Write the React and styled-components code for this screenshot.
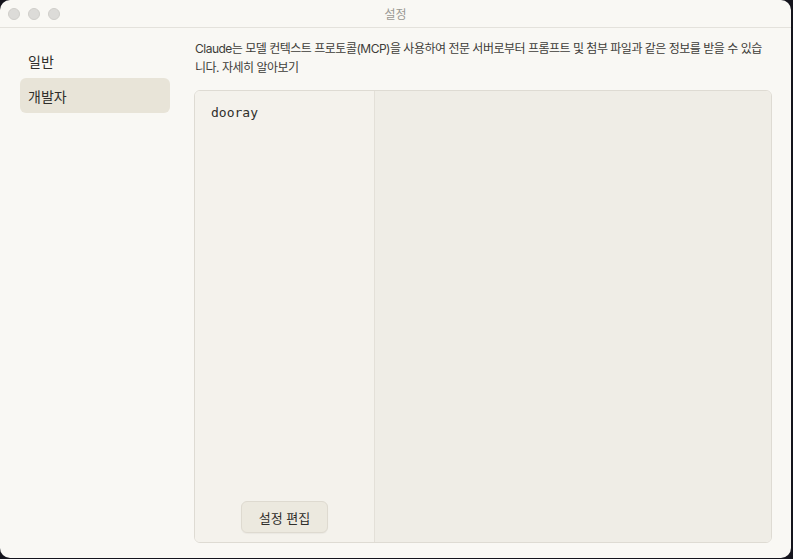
import React from 'react'
import styled, { createGlobalStyle } from 'styled-components'

const Global = createGlobalStyle`
  html, body { margin: 0; padding: 0; background: #14141c; }
  body { font-family: Inter, "Noto Sans CJK KR", "Noto Sans", sans-serif; }
`

const Window = styled.div`
  width: 791px;
  height: 558px;
  background: #f9f8f4;
  border-radius: 10px;
  overflow: hidden;
  display: flex;
  flex-direction: column;
`

const TitleBar = styled.div`
  height: 27px;
  border-bottom: 1px solid #e4e2dc;
  display: flex;
  align-items: center;
  position: relative;
  padding-left: 8px;
  gap: 8px;
  flex-shrink: 0;
`

const Light = styled.span`
  width: 12px;
  height: 12px;
  border-radius: 50%;
  background: #dcdbd8;
  border: 1px solid #cfceca;
  box-sizing: border-box;
`

const Title = styled.div`
  position: absolute;
  left: 0;
  right: 0;
  top: 5px;
  text-align: center;
  font-size: 12px;
  color: #9a9893;
  pointer-events: none;
`

const Body = styled.div`
  flex: 1;
  display: flex;
  padding: 0 19px 15px 20px;
  min-height: 0;
`

const Sidebar = styled.div`
  width: 150px;
  padding-top: 15px;
  display: flex;
  flex-direction: column;
`

const NavItem = styled.div`
  height: 35px;
  display: flex;
  align-items: center;
  padding-left: 8px;
  border-radius: 6px;
  font-size: 14px;
  color: #2f2e2b;
  background: ${p => (p.active ? '#e8e4d8' : 'transparent')};
`

const Main = styled.div`
  flex: 1;
  margin-left: 24px;
  display: flex;
  flex-direction: column;
  min-width: 0;
`

const Desc = styled.p`
  margin: 11px 0 0 1px;
  font-size: 12px;
  line-height: 19px;
  letter-spacing: -0.5px;
  color: #3d3c38;
  word-break: break-all;
`

const Panel = styled.div`
  flex: 1;
  margin-top: 13px;
  border: 1px solid #dedbd3;
  border-radius: 6px;
  overflow: hidden;
  display: flex;
`

const ServerList = styled.div`
  width: 179px;
  background: #f4f2ec;
  border-right: 1px solid #e3e0d8;
  display: flex;
  flex-direction: column;
`

const Server = styled.div`
  padding: 14px 0 0 16px;
  font-family: "DejaVu Sans Mono", "Liberation Mono", monospace;
  font-size: 13px;
  color: #2f2e2b;
`

const Footer = styled.div`
  margin-top: auto;
  display: flex;
  justify-content: center;
  padding-bottom: 9px;
`

const Button = styled.button`
  width: 87px;
  height: 32px;
  background: #ece9df;
  border: 1px solid #dedad0;
  border-radius: 6px;
  font-family: inherit;
  font-size: 13px;
  color: #2f2e2b;
  box-shadow: 0 1px 1px rgba(0,0,0,0.04);
`

const Detail = styled.div`
  flex: 1;
  background: #efede6;
`

const App = () => {
  return (
    <>
      <Global />
      <Window>
        <TitleBar>
          <Light />
          <Light />
          <Light />
          <Title>설정</Title>
        </TitleBar>
        <Body>
          <Sidebar>
            <NavItem>일반</NavItem>
            <NavItem active>개발자</NavItem>
          </Sidebar>
          <Main>
            <Desc>
              Claude는 모델 컨텍스트 프로토콜(MCP)을 사용하여 전문 서버로부터 프롬프트 및 첨부 파일과 같은 정보를 받을 수 있습니다. 자세히 알아보기
            </Desc>
            <Panel>
              <ServerList>
                <Server>dooray</Server>
                <Footer>
                  <Button>설정 편집</Button>
                </Footer>
              </ServerList>
              <Detail />
            </Panel>
          </Main>
        </Body>
      </Window>
    </>
  )
}

export default App
